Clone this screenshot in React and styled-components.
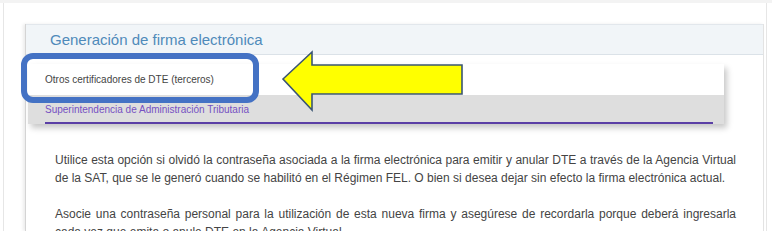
import React from 'react';
import styled, { createGlobalStyle } from 'styled-components';

const GlobalStyle = createGlobalStyle`
    html, body {
        margin: 0;
        padding: 0;
        background: #ffffff;
        font-family: "Liberation Sans", Arial, sans-serif;
    }
`;

const Page = styled.div`
    position: relative;
    width: 772px;
    height: 252px;
    overflow: hidden;
    background: #ffffff;
    border-top: 3px solid #f3f3f3;
    box-sizing: border-box;
`;

const Frame = styled.div`
    margin-left: 3px;
    width: 764px;
    height: 228px;
    box-sizing: border-box;
    border-left: 1px solid #e6e6e6;
    border-right: 1px solid #e6e6e6;
    padding: 21px 2px 0 21px;
    overflow: hidden;
`;

const Card = styled.div`
    height: 100%;
    display: flex;
    flex-direction: column;
    border-left: 1px solid #d4d4d4;
    border-right: 1px solid #e3e3e3;
    box-shadow: -2px 0 3px rgba(0, 0, 0, 0.08);
    background: #ffffff;
`;

const Header = styled.div`
    height: 31px;
    flex-shrink: 0;
    box-sizing: border-box;
    display: flex;
    align-items: center;
    padding-left: 24px;
    background: #f1f5f8;
    border-top: 1px solid #e2e7ec;
    border-bottom: 1px solid #dbe2e8;
    color: #4f8aba;
    font-size: 15px;
`;

const Body = styled.div`
    padding: 96px 27px 0 29px;
    color: #444444;
    font-size: 12px;
    line-height: 18px;
    text-align: justify;

    p {
        margin: 0 0 18px;
    }
`;

const Menu = styled.div`
    position: absolute;
    left: 28px;
    top: 61px;
    width: 696px;
    display: flex;
    flex-direction: column;
    box-shadow: 3px 4px 6px rgba(0, 0, 0, 0.22);
`;

const MenuItem = styled.div`
    position: relative;
    height: ${(p) => p.$h}px;
    display: flex;
    align-items: center;
    padding-left: 17px;
    font-size: 10px;
    color: ${(p) => (p.$muted ? '#7651c2' : '#444444')};
    background: ${(p) => (p.$muted ? '#dedede' : '#ffffff')};

    ${(p) =>
        p.$muted &&
        `
        &::after {
            content: '';
            position: absolute;
            left: 17px;
            right: 11px;
            bottom: 0;
            height: 2px;
            background: #5b3fa6;
        }
    `}
`;

const Highlight = styled.div`
    position: absolute;
    left: 21px;
    top: 50px;
    width: 238px;
    height: 50px;
    box-sizing: border-box;
    border: 6px solid #4472c4;
    border-radius: 12px;
`;

const Arrow = styled.svg`
    position: absolute;
    left: 280px;
    top: 46px;
`;

export default function App() {
    return (
        <>
            <GlobalStyle />
            <Page>
                <Frame>
                    <Card>
                        <Header>Generación de firma electrónica</Header>
                        <Body>
                            <p>
                                Utilice esta opción si olvidó la contraseña asociada a la firma electrónica para emitir y anular DTE a través de la Agencia Virtual de la SAT, que se le generó cuando se habilitó en el Régimen FEL. O bien si desea dejar sin efecto la firma electrónica actual.
                            </p>
                            <p>
                                Asocie una contraseña personal para la utilización de esta nueva firma y asegúrese de recordarla porque deberá ingresarla cada vez que emita o anule DTE en la Agencia Virtual.
                            </p>
                        </Body>
                    </Card>
                </Frame>

                <Menu>
                    <MenuItem $h={31}>Otros certificadores de DTE (terceros)</MenuItem>
                    <MenuItem $h={29} $muted>Superintendencia de Administración Tributaria</MenuItem>
                </Menu>

                <Highlight />

                <Arrow width="186" height="64" viewBox="0 0 186 64">
                    <polygon
                        points="3,30 32,3 32,16 182,16 182,45 32,45 32,61"
                        fill="#ffff00"
                        stroke="#3a5573"
                        strokeWidth="1.6"
                        strokeLinejoin="miter"
                    />
                </Arrow>
            </Page>
        </>
    );
}
